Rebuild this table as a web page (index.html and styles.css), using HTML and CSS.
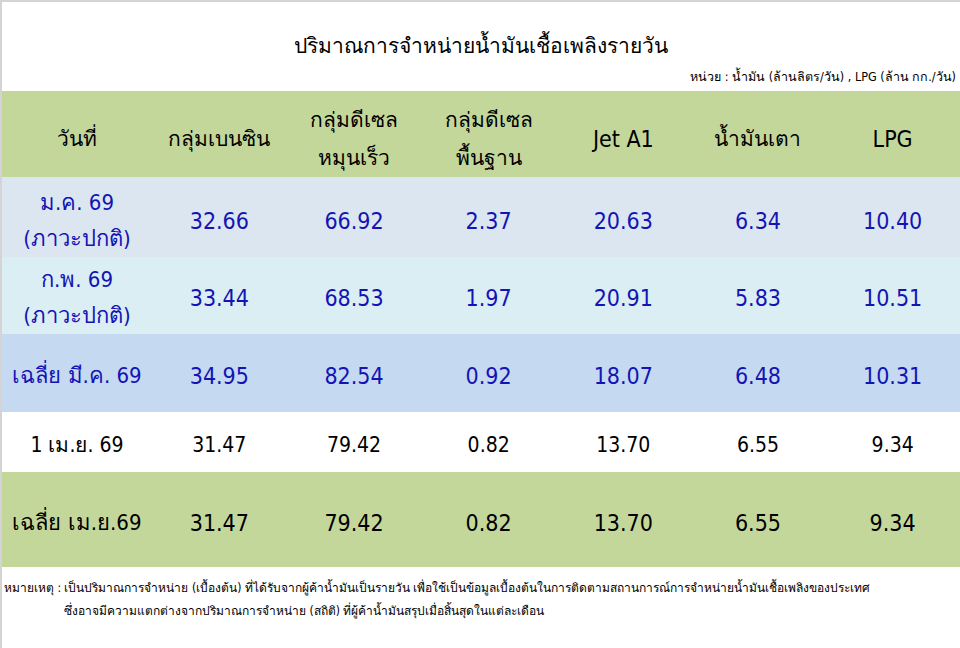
FILE: index.html
```html
<!DOCTYPE html>
<html lang="th">
<head>
<meta charset="utf-8">
<title>ปริมาณการจำหน่ายน้ำมันเชื้อเพลิงรายวัน</title>
<link rel="stylesheet" href="styles.css">
</head>
<body>
<div class="page">
  <h1 class="title">ปริมาณการจำหน่ายน้ำมันเชื้อเพลิงรายวัน</h1>
  <div class="unit">หน่วย : น้ำมัน (ล้านลิตร/วัน) , LPG (ล้าน กก./วัน)</div>
  <table class="grid">
    <colgroup>
      <col class="c-date">
      <col><col><col><col><col><col>
    </colgroup>
    <thead>
      <tr class="r-head">
        <th>วันที่</th>
        <th>กลุ่มเบนซิน</th>
        <th class="two">กลุ่มดีเซล<br>หมุนเร็ว</th>
        <th class="two">กลุ่มดีเซล<br>พื้นฐาน</th>
        <th class="lat">Jet A1</th>
        <th>น้ำมันเตา</th>
        <th class="lat">LPG</th>
      </tr>
    </thead>
    <tbody>
      <tr class="r-jan blue">
        <td class="two">ม.ค. 69<br>(ภาวะปกติ)</td>
        <td>32.66</td><td>66.92</td><td>2.37</td><td>20.63</td><td>6.34</td><td>10.40</td>
      </tr>
      <tr class="r-feb blue">
        <td class="two">ก.พ. 69<br>(ภาวะปกติ)</td>
        <td>33.44</td><td>68.53</td><td>1.97</td><td>20.91</td><td>5.83</td><td>10.51</td>
      </tr>
      <tr class="r-mar blue">
        <td>เฉลี่ย มี.ค. 69</td>
        <td>34.95</td><td>82.54</td><td>0.92</td><td>18.07</td><td>6.48</td><td>10.31</td>
      </tr>
      <tr class="r-day">
        <td>1 เม.ย. 69</td>
        <td>31.47</td><td>79.42</td><td>0.82</td><td>13.70</td><td>6.55</td><td>9.34</td>
      </tr>
      <tr class="r-apr">
        <td>เฉลี่ย เม.ย.69</td>
        <td>31.47</td><td>79.42</td><td>0.82</td><td>13.70</td><td>6.55</td><td>9.34</td>
      </tr>
    </tbody>
  </table>
  <div class="note">
    <p class="note-l1">หมายเหตุ : เป็นปริมาณการจำหน่าย (เบื้องต้น) ที่ได้รับจากผู้ค้าน้ำมันเป็นรายวัน เพื่อใช้เป็นข้อมูลเบื้องต้นในการติดตามสถานการณ์การจำหน่ายน้ำมันเชื้อเพลิงของประเทศ</p>
    <p class="note-l2">ซึ่งอาจมีความแตกต่างจากปริมาณการจำหน่าย (สถิติ) ที่ผู้ค้าน้ำมันสรุปเมื่อสิ้นสุดในแต่ละเดือน</p>
  </div>
</div>
</body>
</html>
```
FILE: styles.css
```css
html, body {
  margin: 0;
  padding: 0;
  background: #ffffff;
}
body {
  width: 960px;
  height: 648px;
  overflow: hidden;
  box-sizing: border-box;
  border-top: 2px solid #d4d4d4;
  border-left: 2px solid #d4d4d4;
  font-family: "DejaVu Sans Condensed", "DejaVu Sans", "Noto Sans", sans-serif;
  color: #000;
}
.page {
  display: flex;
  flex-direction: column;
}
.title {
  margin: 0;
  padding-top: 28px;
  height: 32px;
  font-size: 21px;
  font-weight: normal;
  text-align: center;
  line-height: 32px;
}
.unit {
  height: 29px;
  font-size: 12.5px;
  line-height: 29px;
  text-align: right;
  padding-right: 4px;
}
.grid {
  width: 958px;
  border-collapse: collapse;
  table-layout: fixed;
}
.grid col { width: 134.67px; }
.grid col.c-date { width: 150px; }
.grid th, .grid td {
  padding: 6px 0 0 0;
  text-align: center;
  vertical-align: middle;
  font-weight: normal;
  font-size: 23px;
  line-height: 40px;
}
.grid td:first-child { font-size: 22px; }

.r-head { background: #c4d79b; height: 86px; }
.r-head th { font-size: 21px; padding-top: 10px; line-height: 38px; }
.r-head th.lat { font-size: 23px; }

.blue td { color: #1414b4; }
.r-jan { background: #dce6f1; height: 80px; }
.r-jan td { padding-top: 8px; line-height: 36px; }
.r-feb { background: #daeef3; height: 77px; }
.r-feb td { padding-top: 5px; line-height: 36px; }
.r-mar { background: #c5d9f1; height: 78px; }
.r-day { background: #ffffff; height: 60px; }
.r-day td { font-size: 21px; }
.r-day td:first-child { font-size: 21px; }
.r-apr { background: #c4d79b; height: 95px; }

.note {
  padding-top: 10px;
  font-size: 12px;
}
.note p {
  margin: 0;
  line-height: 23px;
  white-space: nowrap;
}
.note-l1 { padding-left: 2px; }
.note-l2 { padding-left: 62px; }
```
